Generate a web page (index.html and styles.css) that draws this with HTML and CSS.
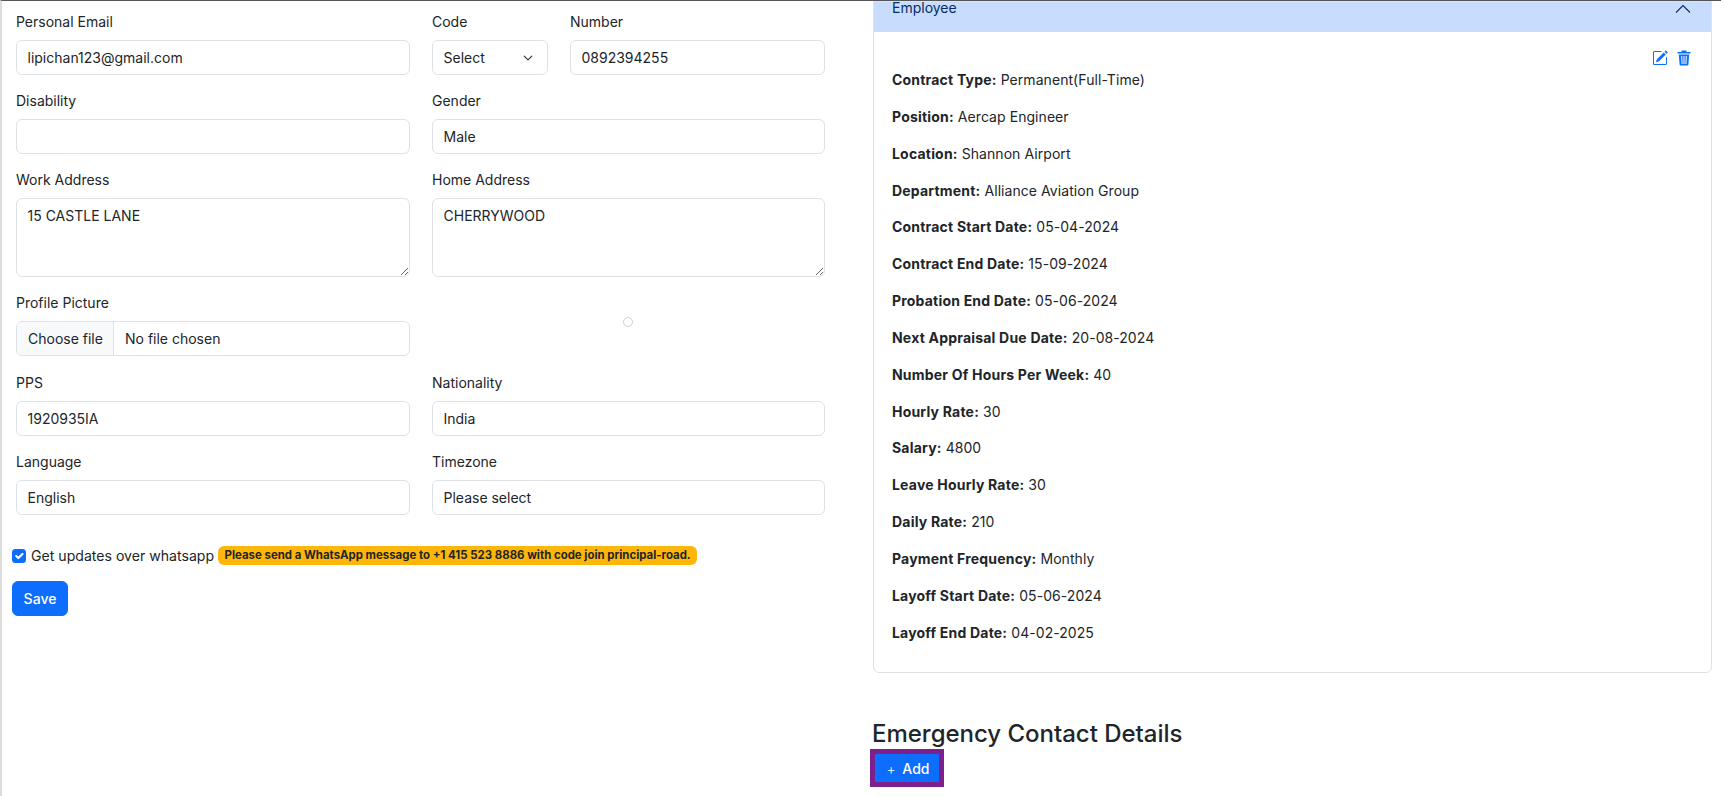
FILE: index.html
```html
<!DOCTYPE html>
<html lang="en">
<head>
<meta charset="utf-8">
<title>Employee details</title>
<link rel="stylesheet" href="styles.css">
</head>
<body>
<div class="page">
  <form class="left">
    <div class="fields">
      <div class="field"><label>Personal Email</label><input class="control" value="lipichan123@gmail.com"></div>
      <div class="phone">
        <div class="field"><label>Code</label><select class="control select"><option>Select</option></select></div>
        <div class="field"><label>Number</label><input class="control" value="0892394255"></div>
      </div>
      <div class="field"><label>Disability</label><input class="control"></div>
      <div class="field"><label>Gender</label><input class="control" value="Male"></div>
      <div class="field"><label>Work Address</label><textarea class="control area">15 CASTLE LANE</textarea></div>
      <div class="field"><label>Home Address</label><textarea class="control area">CHERRYWOOD</textarea></div>
      <div class="field">
        <label>Profile Picture</label>
        <div class="control file"><span class="file-btn">Choose file</span><span class="file-name">No file chosen</span></div>
      </div>
      <div class="preview"><span class="ring"></span></div>
      <div class="field"><label>PPS</label><input class="control" value="1920935IA"></div>
      <div class="field"><label>Nationality</label><input class="control" value="India"></div>
      <div class="field"><label>Language</label><input class="control" value="English"></div>
      <div class="field"><label>Timezone</label><input class="control" value="Please select"></div>
    </div>
    <div class="whatsapp">
      <input class="check" type="checkbox" checked>
      <span class="check-label">Get updates over whatsapp</span>
      <span class="badge">Please send a WhatsApp message to +1 415 523 8886 with code join principal-road.</span>
    </div>
    <button class="btn save" type="button">Save</button>
  </form>
  <section class="right">
    <div class="card">
      <div class="card-head">
        <span>Employee</span>
        <svg class="chev" viewBox="0 0 16 16" width="16" height="16"><path d="M1 11.500 8 4.500l7 7" fill="none" stroke="#052c65" stroke-width="1.100"/></svg>
      </div>
      <div class="card-body">
        <div class="tools">
          <svg viewBox="0 0 16 16" width="16" height="16" fill="#0d6efd"><path d="M15.502 1.94a.5.5 0 0 1 0 .706L14.459 3.69l-2-2L13.502.646a.5.5 0 0 1 .707 0l1.293 1.293zm-1.75 2.456-2-2L4.939 9.21a.5.5 0 0 0-.121.196l-.805 2.414a.25.25 0 0 0 .316.316l2.414-.805a.5.5 0 0 0 .196-.12l6.813-6.814z"/><path fill-rule="evenodd" d="M1 13.5A1.5 1.5 0 0 0 2.5 15h11a1.5 1.5 0 0 0 1.5-1.5v-6a.5.5 0 0 0-1 0v6a.5.5 0 0 1-.5.5h-11a.5.5 0 0 1-.5-.5v-11a.5.5 0 0 1 .5-.5H9a.5.5 0 0 0 0-1H2.5A1.5 1.5 0 0 0 1 2.5v11z"/></svg>
          <svg viewBox="0 0 16 16" width="16" height="16" fill="#0d6efd"><path d="M6 .5h4a.5.5 0 0 1 .5.5v1H14a.7.7 0 0 1 0 1.5H2A.7.7 0 0 1 2 2h3.500V1A.5.5 0 0 1 6 .5z"/><path fill-rule="evenodd" d="M2.800 4.500h10.400l-.8 10a1 1 0 0 1-1 .9H4.600a1 1 0 0 1-1-.9l-.8-10zM5.200 6l.4 8h1l-.4-8h-1zm2.300 0v8h1V6h-1zm2.300 0-.4 8h1l.4-8h-1z"/></svg>
        </div>
        <p><b>Contract Type:</b> Permanent(Full-Time)</p>
        <p><b>Position:</b> Aercap Engineer</p>
        <p><b>Location:</b> Shannon Airport</p>
        <p><b>Department:</b> Alliance Aviation Group</p>
        <p><b>Contract Start Date:</b> 05-04-2024</p>
        <p><b>Contract End Date:</b> 15-09-2024</p>
        <p><b>Probation End Date:</b> 05-06-2024</p>
        <p><b>Next Appraisal Due Date:</b> 20-08-2024</p>
        <p><b>Number Of Hours Per Week:</b> 40</p>
        <p><b>Hourly Rate:</b> 30</p>
        <p><b>Salary:</b> 4800</p>
        <p><b>Leave Hourly Rate:</b> 30</p>
        <p><b>Daily Rate:</b> 210</p>
        <p><b>Payment Frequency:</b> Monthly</p>
        <p><b>Layoff Start Date:</b> 05-06-2024</p>
        <p><b>Layoff End Date:</b> 04-02-2025</p>
      </div>
    </div>
    <h4 class="title">Emergency Contact Details</h4>
    <button class="btn add" type="button"><span class="plus">+</span> Add</button>
  </section>
</div>
</body>
</html>
```

FILE: styles.css
```css
* { box-sizing: border-box; }
html, body { margin: 0; height: 796px; overflow: hidden; background: #fff; }
body {
  font-family: Inter, "Liberation Sans", sans-serif;
  font-size: 14px;
  line-height: 21px;
  color: #212529;
}
.page {
  display: flex;
  height: 796px;
  margin-right: 3px;
  border-top: 1px solid #555;
  border-left: 2px solid #ddd;
}
.left { width: 871px; flex: none; padding: 10px 0 0 10px; }
.fields {
  display: grid;
  grid-template-columns: 394px 393px;
  column-gap: 22px;
  row-gap: 15px;
  padding-left: 4px;
}
.field { min-width: 0; }
.field label { display: block; height: 21px; margin-bottom: 8px; }
.phone { display: grid; grid-template-columns: 116px 1fr; column-gap: 22px; }
.control {
  display: block;
  width: 100%;
  height: 35px;
  padding: 6px 10.5px;
  border: 1px solid #dee2e6;
  border-radius: 6px;
  background: #fff;
  color: #212529;
  font: 14px/21px Inter, "Liberation Sans", sans-serif;
}
.select {
  appearance: none;
  background-image: url("data:image/svg+xml,%3csvg xmlns='http://www.w3.org/2000/svg' viewBox='0 0 16 16'%3e%3cpath fill='none' stroke='%23343a40' stroke-linecap='round' stroke-linejoin='round' stroke-width='2' d='m2 5 6 6 6-6'/%3e%3c/svg%3e");
  background-repeat: no-repeat;
  background-position: right 13px center;
  background-size: 12px 10px;
}
.area { height: 79px; }
.file { display: flex; padding: 0; margin-bottom: 1px; overflow: hidden; }
.file-btn {
  width: 97px;
  flex: none;
  padding: 6px 11px;
  border-right: 1px solid #dee2e6;
  background: #f8f9fa;
  white-space: nowrap;
}
.file-name { padding: 6px 11px; }
.preview { display: flex; align-items: center; justify-content: center; padding: 0 2px 6px 0; }
.ring { width: 10px; height: 10px; border: 1px solid #ced4da; border-radius: 50%; }
.whatsapp { display: flex; align-items: center; gap: 4px; margin-top: 30px; height: 21px; }
.check {
  appearance: none;
  width: 14px;
  height: 14px;
  margin: 0 1px 0 0;
  border-radius: 3.5px;
  background: #0d6efd url("data:image/svg+xml,%3csvg xmlns='http://www.w3.org/2000/svg' viewBox='0 0 20 20'%3e%3cpath fill='none' stroke='%23fff' stroke-linecap='round' stroke-linejoin='round' stroke-width='3' d='m6 10 3 3 6-6'/%3e%3c/svg%3e") center / 100% no-repeat;
}
.check-label { font-size: 14.1px; }
.badge {
  padding: 3px 6.5px;
  border-radius: 6px;
  background: #ffb60a;
  color: #212529;
  font-size: 11.42px;
  line-height: 13px;
  font-weight: 700;
}
.btn {
  display: block;
  border: 1px solid #0d6efd;
  border-radius: 6px;
  background: #0d6efd;
  color: #fff;
  font: 500 14px/21px Inter, "Liberation Sans", sans-serif;
}
.save { width: 56px; height: 35px; margin-top: 15px; padding: 0; }
.right { width: 839px; flex: none; }
.card { border: 1px solid #dee2e6; border-radius: 0 0 6px 6px; height: 672px; }
.card-head {
  display: flex;
  justify-content: space-between;
  height: 30px;
  padding: 0 20px 0 18px;
  background: #c8ddfd;
  color: #052c65;
  line-height: 12px;
}
.chev { margin-top: -1px; }
.card-body { padding: 18px 18px 0; }
.tools { display: flex; justify-content: flex-end; gap: 8px; height: 19px; padding-right: 1px; }
.card-body p { margin: 0 0 15.85px; letter-spacing: .06px; }
.card-body b { font-weight: 650; letter-spacing: .2px; }
.title { margin: 46px 0 0 -1px; font-size: 24px; line-height: 29px; font-weight: 500; letter-spacing: -.02px; color: #212529; }
.add {
  width: 64px;
  height: 28px;
  margin: 6px 0 0 2px;
  padding: 0 0 0 2px;
  border-radius: 0;
  box-shadow: 0 0 0 5px #7d1f8c;
}
.plus { font-weight: 300; margin-right: 3px; }
```
